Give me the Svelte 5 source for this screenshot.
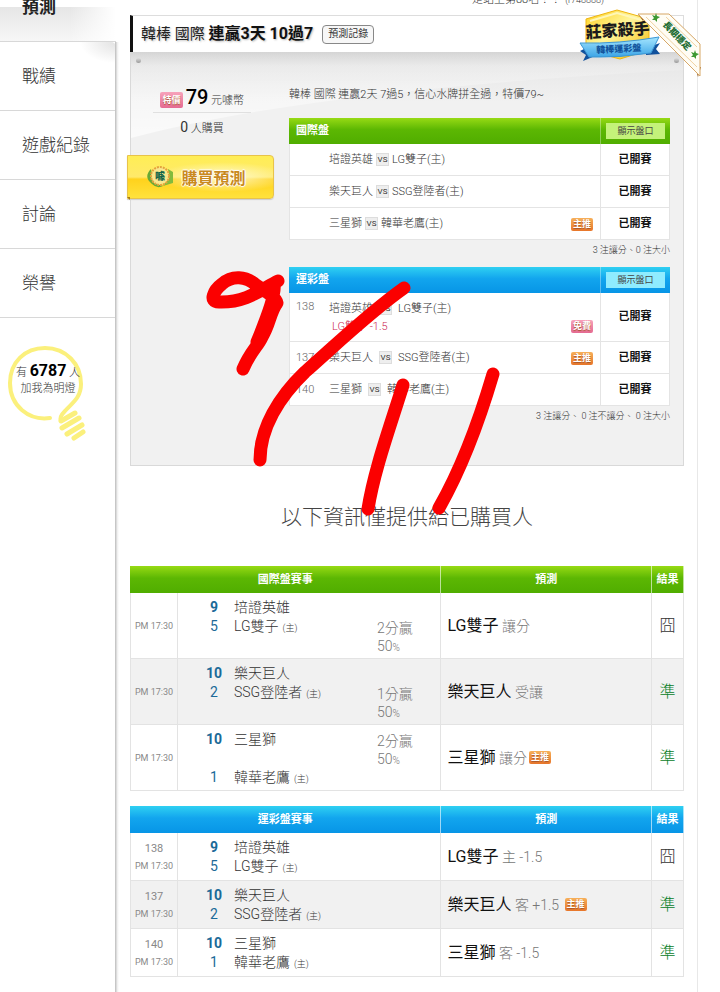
<script lang="ts">
	const menu = ['預測', '戰績', '遊戲紀錄', '討論', '榮譽'];

	const markets = [
		{
			name: '國際盤',
			color: 'green',
			note: '3 注讓分、0 注大小',
			games: [
				{ away: '培證英雄', home: 'LG雙子(主)' },
				{ away: '樂天巨人', home: 'SSG登陸者(主)' },
				{ away: '三星獅', home: '韓華老鷹(主)', tag: '主推' }
			]
		},
		{
			name: '運彩盤',
			color: 'blue',
			note: '3 注讓分、 0 注不讓分、 0 注大小',
			games: [
				{ no: '138', away: '培證英雄', home: 'LG雙子(主)', pick: 'LG雙子 -1.5', tag: '免費' },
				{ no: '137', away: '樂天巨人', home: 'SSG登陸者(主)', tag: '主推' },
				{ no: '140', away: '三星獅', home: '韓華老鷹(主)' }
			]
		}
	];

	const results = [
		{
			title: '國際盤賽事',
			color: 'green',
			games: [
				{ away: ['9', '培證英雄'], home: ['5', 'LG雙子', '2分贏'], pick: 'LG雙子', kind: ' 讓分', hit: false },
				{ away: ['10', '樂天巨人'], home: ['2', 'SSG登陸者', '1分贏'], pick: '樂天巨人', kind: ' 受讓', hit: true },
				{ away: ['10', '三星獅', '2分贏'], home: ['1', '韓華老鷹'], pick: '三星獅', kind: ' 讓分', tag: '主推', hit: true }
			]
		},
		{
			title: '運彩盤賽事',
			color: 'blue',
			games: [
				{ no: '138', away: ['9', '培證英雄'], home: ['5', 'LG雙子'], pick: 'LG雙子', kind: ' 主 -1.5', hit: false },
				{ no: '137', away: ['10', '樂天巨人'], home: ['2', 'SSG登陸者'], pick: '樂天巨人', kind: ' 客 +1.5 ', tag: '主推', hit: true },
				{ no: '140', away: ['10', '三星獅'], home: ['1', '韓華老鷹'], pick: '三星獅', kind: ' 客 -1.5', hit: true }
			]
		}
	];
</script>

{#snippet team(row, isHome)}
	<div class="team">
		<span class="score" class:win={!isHome}>{row[0]}</span>
		<span class="name">{row[1]}{#if isHome}<small>(主)</small>{/if}</span>
		{#if row[2]}
			<span class="odds">{row[2]}<br />50<small>%</small></span>
		{/if}
	</div>
{/snippet}

<div class="page">
	<aside>
		<nav>
			{#each menu as item, i}
				<a href="#tab{i}" class:active={i === 0}>{item}</a>
			{/each}
		</nav>
		<div class="bulb">
			<svg viewBox="0 0 82 100" width="82" height="100" fill="none" stroke="#fbf07c" aria-hidden="true">
				<path d="M43 74C22 77 3 62 3 39C3 18 18 4 38 4C59 4 74 20 74 40C74 54 65 59 58 67C54 71 52 74 54 77" stroke-width="4" stroke-linecap="round" />
				<path d="M54 77L68 69M55 84L72 74M60 90L75 81M67 94L76 88" stroke-width="5" stroke-linecap="round" />
			</svg>
			<p>有 <b>6787</b> 人<br />加我為明燈</p>
		</div>
	</aside>

	<main>
		<p class="top-note">是站上第88名！！<small>(r748888)</small></p>

		<header>
			<h1>韓棒 國際 <b>連贏3天 10過7</b></h1>
			<button class="record">預測記錄</button>
			<svg class="medal" viewBox="0 0 124 78" width="124" height="78" aria-hidden="true">
				<defs>
					<linearGradient id="gold" x1="0" y1="0" x2="1" y2="1">
						<stop offset="0" stop-color="#ffd21f" />
						<stop offset="0.45" stop-color="#fff59a" />
						<stop offset="1" stop-color="#f3b800" />
					</linearGradient>
					<linearGradient id="sky" x1="0" y1="0" x2="0" y2="1">
						<stop offset="0" stop-color="#a5e6ff" />
						<stop offset="1" stop-color="#3ba4e6" />
					</linearGradient>
				</defs>
				<path d="M3 50L13 45L18 55L6 60L9 54Z" fill="#11519c" />
				<path d="M69 47L83 42L79 48L83 53L69 54Z" fill="#11519c" />
				<path d="M9 18L40 9L72 18V49L43 58L9 49Z" fill="url(#gold)" stroke="#efb511" />
				<path d="M13 20L40 12L68 20" fill="none" stroke="#fff7b8" stroke-width="2" />
				<path d="M3 42Q42 43 82 36L74 52Q43 57 12 56Z" fill="url(#sky)" stroke="#3c97d4" />
				<text x="41" y="35" class="medal-title" transform="rotate(-4 41 35)">莊家殺手</text>
				<text x="42" y="51" class="medal-sub" transform="rotate(-3 42 51)">韓棒運彩盤</text>
				<path d="M61 13L66 20L71 13Z M118 66L121 76L124 66Z" fill="#9d6426" />
				<path d="M61 13H92L123 43V75Z" fill="#fffdf5" stroke="#d7a767" />
				<path d="M69 16L120 66M89 16L120 46" stroke="#f1d3a2" fill="none" />
				<text x="100" y="38" class="medal-ribbon" transform="rotate(46 100 35)">長期穩定</text>
				<path id="star" d="M79 12L80 15L83 16L80 18L80 21L78 19L75 19L77 17L75 14L78 15Z" fill="#3c9933" />
				<use href="#star" x="39" y="37" />
			</svg>
		</header>

		<section class="panel">
			<svg class="shine" viewBox="0 0 554 90" preserveAspectRatio="none" aria-hidden="true">
				<defs>
					<linearGradient id="glow" x1="0" y1="0" x2="0" y2="1">
						<stop offset="0" stop-color="#fff" stop-opacity="0" />
						<stop offset="1" stop-color="#fff" stop-opacity="0.7" />
					</linearGradient>
				</defs>
				<path d="M0 0H554V18Q180 38 0 86Z" fill="url(#glow)" />
			</svg>
			<i class="screw"></i>
			<i class="screw right"></i>

			<div class="buy">
				<p class="price"><span class="tag pink large">特價</span> <b>79</b> 元噱幣</p>
				<p class="buyers"><b>0</b> 人購買</p>
				<button>
					<svg viewBox="0 0 30 24" width="30" height="24" aria-hidden="true">
						<path d="M6 4Q-2 12 7 19Q12 24 18 21L8 15Z" fill="#65a936" />
						<path d="M23 4L28 7V18L18 21L24 13Z" fill="#82bb3d" />
						<circle cx="15" cy="11" r="9" fill="#f9e78e" stroke="#e4a23e" stroke-width="2" stroke-dasharray="2 1" />
						<text x="15" y="15" class="coin">噱</text>
					</svg>
					<span>購買預測</span>
				</button>
			</div>

			<div class="detail">
				<p class="intro">韓棒 國際 連贏2天 7過5，信心水牌拼全過，特價79~</p>
				{#each markets as market}
					<table class="market {market.color}">
						<thead>
							<tr>
								<th>{market.name}</th>
								<th class="state"><button>顯示盤口</button></th>
							</tr>
						</thead>
						<tbody>
							{#each market.games as game}
								<tr>
									<td>
										<div class="match">
											<span class="no">{game.no ?? ''}</span>
											<div class="versus">
												{game.away}<i class="vs">VS</i>{game.home}
												{#if game.pick}<div class="pick">{game.pick}</div>{/if}
											</div>
											{#if game.tag}
												<span class="tag" class:pink={game.tag === '免費'}>{game.tag}</span>
											{/if}
										</div>
									</td>
									<td class="state">已開賽</td>
								</tr>
							{/each}
						</tbody>
					</table>
					<p class="note">{market.note}</p>
				{/each}
			</div>
		</section>

		<h2>以下資訊僅提供給已購買人</h2>

		{#each results as result}
			<table class="results {result.color}">
				<colgroup>
					<col class="col-time" />
					<col />
					<col class="col-forecast" />
					<col class="col-outcome" />
				</colgroup>
				<thead>
					<tr>
						<th colspan="2">{result.title}</th>
						<th>預測</th>
						<th>結果</th>
					</tr>
				</thead>
				<tbody>
					{#each result.games as game}
						<tr>
							<td class="time">
								{#if game.no}<span>{game.no}</span>{/if}
								PM 17:30
							</td>
							<td class="teams">
								{@render team(game.away, false)}
								{@render team(game.home, true)}
							</td>
							<td class="forecast">{game.pick}<span>{game.kind}</span>{#if game.tag}<em class="tag">{game.tag}</em>{/if}</td>
							<td class="outcome" class:hit={game.hit}>{game.hit ? '準' : '囧'}</td>
						</tr>
					{/each}
				</tbody>
			</table>
		{/each}

		<svg class="scribble" viewBox="200 260 310 260" width="310" height="260" aria-hidden="true">
			<path d="M278 281C262 289 246 303 219 302C208 302 214 290 222 284C232 275 246 276 256 285C265 291 276 297 277 303C270 312 270 324 262 337C258 346 250 352 243 369M274 284C276 291 269 313 257 342" />
			<path d="M404 288C370 312 340 341 305 372C279 397 260 428 260 460" />
			<path d="M403 385C391 424 374 470 368 509" />
			<path d="M493 374C480 418 464 464 439 508" />
		</svg>
	</main>
</div>

<style>
	:global(body) {
		margin: 0;
		background: #fff;
	}

	.page, .page * {
		box-sizing: border-box;
	}

	.page {
		display: flex;
		min-height: 100vh;
		overflow: hidden;
		padding-right: 22px;
		font-family: Roboto, "Noto Sans CJK TC", sans-serif;
		font-size: 11px;
		font-weight: 300;
		line-height: 16px;
		color: #333;
	}

	p, h1, h2 {
		margin: 0;
		font-weight: 300;
	}

	button {
		font-family: inherit;
		padding: 0;
		cursor: pointer;
	}

	aside {
		position: relative;
		width: 116px;
		flex: none;
	}

	aside::after {
		content: "";
		position: absolute;
		left: 115px;
		top: 42px;
		bottom: 0;
		width: 4px;
		background: linear-gradient(90deg, #bbb, #f0f0f0 60%, #fff);
	}

	nav {
		display: flex;
		flex-direction: column;
		margin-top: -27px;
	}

	nav a {
		height: 69px;
		padding-left: 22px;
		border-bottom: 1px solid #d8d8d8;
		font-size: 17px;
		line-height: 68px;
		color: #333;
		text-decoration: none;
	}

	nav a.active {
		font-weight: 700;
		color: #222;
		background: linear-gradient(90deg, transparent 60%, #fff), linear-gradient(#fff 34px, #e6e6e6 34px, #f7f7f7);
	}

	nav a:nth-child(2) {
		border-top-right-radius: 5px;
		background: radial-gradient(ellipse at 100% 0, #e2e2e2, #fff 22%);
	}

	.bulb {
		display: grid;
		margin: 26px 0 0 7px;
		width: 82px;
	}

	.bulb svg, .bulb p {
		grid-area: 1 / 1;
	}

	.bulb p {
		padding-top: 19px;
		text-align: center;
		white-space: nowrap;
		z-index: 1;
	}

	.bulb b {
		font-size: 16px;
		font-weight: 700;
		color: #000;
	}

	main {
		position: relative;
		display: flex;
		flex-direction: column;
		flex: 1;
		min-width: 0;
		padding: 0 13px 15px 14px;
		border-right: 1px solid #e8e8e8;
	}

	.top-note {
		height: 23px;
		margin-top: -8px;
		padding-right: 80px;
		text-align: right;
	}

	.top-note small {
		margin-left: 4px;
		font-size: 9px;
	}

	header {
		display: flex;
		align-items: center;
		gap: 9px;
		height: 37px;
		padding-left: 8px;
		border: 1px solid #ddd;
		border-left: 3px solid #111;
		border-bottom: 0;
		position: relative;
	}

	h1 {
		font-size: 15px;
		font-weight: 400;
		line-height: 24px;
		color: #222;
		text-shadow: 1px 1px 2px #bbb;
	}

	h1 b {
		font-size: 16px;
		color: #111;
	}

	.record {
		height: 19px;
		padding: 0 5px;
		border: 1px solid #888;
		border-radius: 4px;
		background: #f7f7f7;
		font-size: 10px;
		line-height: 16px;
		color: #333;
	}

	.medal {
		position: absolute;
		right: -18px;
		top: -15px;
		z-index: 2;
	}

	.medal text, .coin {
		text-anchor: middle;
		font-weight: 900;
	}

	.medal-title {
		font-size: 16px;
		fill: #1b1b1b;
	}

	.medal-sub {
		font-size: 9px;
		fill: #12549d;
	}

	.medal-ribbon {
		font-size: 9px;
		fill: #246f35;
	}

	.panel {
		position: relative;
		display: flex;
		min-height: 414px;
		padding: 35px 13px 0 0;
		border: 1px solid #d9d9d9;
		border-top: 0;
		background: linear-gradient(#d5d5d5, #e8e8e8 14px, #f1f1f1 50px);
	}

	.shine {
		position: absolute;
		left: 0;
		top: 0;
		width: 100%;
		height: 90px;
	}

	.screw {
		position: absolute;
		left: 5px;
		top: 6px;
		width: 5px;
		height: 5px;
		border-radius: 50%;
		background: linear-gradient(#ddd, #999);
	}

	.screw.right {
		left: auto;
		right: 4px;
	}

	.buy {
		position: relative;
		width: 158px;
		flex: none;
	}

	.price, .buyers {
		width: 98px;
		margin-left: 22px;
		text-align: center;
		white-space: nowrap;
	}

	.price {
		height: 26px;
		border-bottom: 1px solid #e0e0e0;
		line-height: 20px;
	}

	.price b {
		font-size: 20px;
		font-weight: 500;
		color: #000;
	}

	.buyers {
		line-height: 28px;
	}

	.buyers b {
		font-size: 14px;
		font-weight: 400;
	}

	.buy button {
		display: flex;
		align-items: center;
		justify-content: center;
		gap: 6px;
		width: 147px;
		height: 44px;
		margin: 12px 0 0 -4px;
		padding-right: 10px;
		border: 1px solid #e8c34a;
		border-radius: 0 4px 4px 0;
		background: radial-gradient(ellipse at 65% 50%, #fffbd0, transparent 50%), linear-gradient(#ffee55, #ffe96a 50%, #ffd21c 55%, #ffe23c);
		box-shadow: 0 1px 1px #ccc;
	}

	.buy button::after {
		content: "";
		position: absolute;
		left: -4px;
		top: 110px;
		border-top: 3px solid #a57d12;
		border-left: 3px solid transparent;
	}

	.buy button span {
		font-size: 16px;
		font-weight: 700;
		color: #c98a1e;
		text-shadow: 1px 0 1px #fff, -1px 0 1px #fff, 0 1px 1px #fff, 0 -1px 1px #fff;
	}

	.coin {
		font-size: 10px;
		fill: #17664a;
	}

	.detail {
		position: relative;
		flex: 1;
		min-width: 0;
	}

	.intro {
		height: 31px;
	}

	table {
		width: 100%;
		border-collapse: separate;
		border-spacing: 0;
		table-layout: fixed;
		background: #fff;
	}

	th, td {
		padding: 0;
	}

	th {
		font-weight: 700;
		color: #fff;
	}

	.green thead {
		background: linear-gradient(#97da14, #5cb703 45%, #50ad00);
	}

	.blue thead {
		background: linear-gradient(#2fd0f2, #12a5ee 45%, #0795e6);
	}

	.market th {
		height: 26px;
		padding-left: 7px;
		text-align: left;
	}

	.market td {
		height: 32px;
		border: 1px solid #e4e4e4;
		border-top: 0;
		border-right: 0;
	}

	.market .state {
		width: 70px;
		padding: 0;
		text-align: center;
	}

	.market th.state {
		border-left: 1px solid #ffffff55;
	}

	.market td.state {
		border-right: 1px solid #e4e4e4;
		font-weight: 700;
		color: #111;
	}

	.market th button {
		display: block;
		width: 59px;
		height: 16px;
		margin: 0 auto;
		border: 0;
		background: #c4f27a;
		font-size: 9px;
		line-height: 16px;
		color: #444;
	}

	.market.blue th button {
		background: #8fecff;
	}

	.match {
		display: flex;
		align-items: flex-end;
		padding: 0 7px 0 6px;
	}

	.no {
		width: 33px;
		align-self: flex-start;
		color: #666;
	}

	.versus {
		flex: 1;
	}

	.vs {
		display: inline-block;
		width: 13px;
		height: 13px;
		margin: 0 3px;
		border: 1px solid #ddd;
		background: #eee;
		font-size: 8px;
		font-style: normal;
		font-weight: 400;
		line-height: 11px;
		text-align: center;
		vertical-align: 1px;
	}

	.blue .vs {
		margin: 0 6px;
	}

	.pick {
		padding: 2px 0 0 3px;
		color: #cc2853;
	}

	.blue tbody tr:first-child .versus {
		padding: 8px 0 6px;
	}

	.blue tbody tr:first-child .no {
		padding-top: 6px;
	}

	.blue tbody tr:first-child .match .tag {
		margin-bottom: 8px;
	}

	.tag {
		display: inline-block;
		width: 22px;
		height: 13px;
		margin-bottom: 1px;
		border-radius: 2px;
		background: linear-gradient(#f6b05a, #e8762a);
		font-size: 9px;
		font-style: normal;
		font-weight: 700;
		line-height: 13px;
		text-align: center;
		color: #fff;
		text-shadow: 0 1px 1px #a4542a;
	}

	.tag.pink {
		background: linear-gradient(#f7a3bb, #e56a92);
	}

	.tag.large {
		width: 23px;
		height: 16px;
		margin-bottom: 0;
		line-height: 16px;
		vertical-align: 1px;
	}

	.note {
		height: 27px;
		padding-top: 2px;
		font-size: 9px;
		text-align: right;
	}

	h2 {
		padding: 35px 0 33px;
		font-size: 21px;
		line-height: 32px;
		text-align: center;
		color: #444;
	}

	.results + .results {
		margin-top: 15px;
	}

	.col-time {
		width: 48px;
	}

	.col-forecast {
		width: 38%;
	}

	.col-outcome {
		width: 32px;
	}

	.results th {
		height: 27px;
		border-right: 1px solid #ffffff99;
	}

	.results td {
		border-right: 1px solid #e3e3e3;
		border-bottom: 1px solid #e3e3e3;
	}

	.results td:first-child {
		border-left: 1px solid #e3e3e3;
	}

	.results tr:nth-child(even) td {
		background: #f1f1f1;
	}

	.green .time {
		height: 66px;
	}

	.blue .time {
		height: 48px;
	}

	.time {
		font-size: 9px;
		font-weight: 400;
		text-align: center;
		white-space: nowrap;
		color: #888;
	}

	.time span {
		display: block;
		font-size: 11px;
		line-height: 18px;
	}

	.results .teams {
		padding: 5px 0 3px 23px;
		font-size: 14px;
		line-height: 19px;
		vertical-align: top;
	}

	.team {
		display: flex;
		white-space: nowrap;
	}

	.score {
		width: 26px;
		flex: none;
		margin-right: 7px;
		text-align: center;
		font-weight: 400;
		color: #1b6a98;
	}

	.score.win {
		font-weight: 700;
	}

	.name {
		width: 143px;
		flex: none;
		height: 19px;
	}

	.name small {
		margin-left: 4px;
		font-size: 9px;
		line-height: 1;
	}

	.odds {
		height: 38px;
		padding-top: 2px;
		line-height: 18px;
		color: #777;
	}

	.odds small {
		font-size: 10px;
		line-height: 1;
	}

	td.forecast {
		padding-left: 6px;
		font-size: 16px;
		font-weight: 400;
		color: #111;
	}

	td.forecast span {
		font-size: 14px;
		font-weight: 300;
		color: #777;
	}

	.forecast .tag {
		margin-left: 2px;
		vertical-align: middle;
	}

	td.outcome {
		font-size: 16px;
		text-align: center;
	}

	td.outcome.hit {
		color: #088028;
	}

	.scribble {
		position: absolute;
		left: 84px;
		top: 260px;
		z-index: 3;
		fill: none;
		stroke: #fb0000;
		stroke-width: 13;
		stroke-linecap: round;
		stroke-linejoin: round;
		pointer-events: none;
	}
</style>
